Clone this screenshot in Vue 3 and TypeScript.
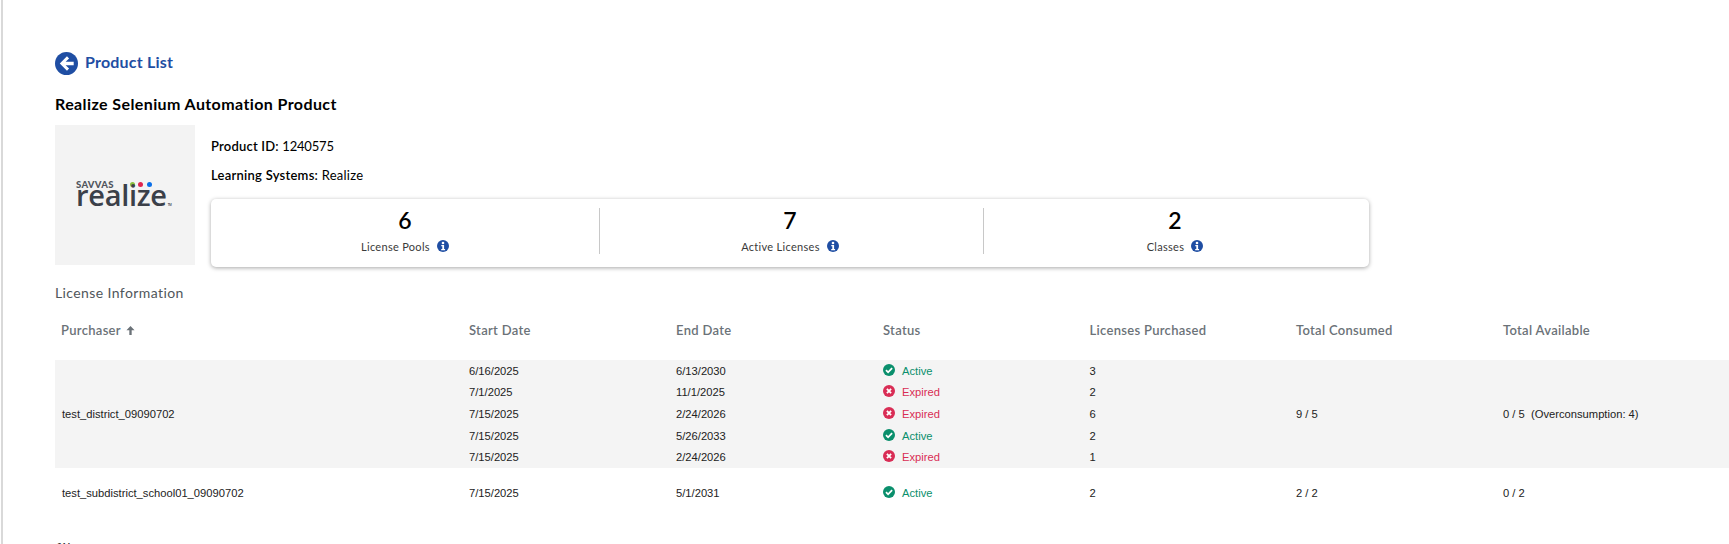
<script setup lang="ts">
type Pool = {
  start: string;
  end: string;
  active: boolean;
  purchased: number;
}

type Purchaser = {
  name: string;
  pools: Pool[];
  consumed: string;
  available: string;
}

const stats = [
  { value: 6, label: 'License Pools' },
  { value: 7, label: 'Active Licenses' },
  { value: 2, label: 'Classes' },
];

const columns = ['Start Date', 'End Date', 'Status', 'Licenses Purchased', 'Total Consumed', 'Total Available'];

const purchasers: Purchaser[] = [
  {
    name: 'test_district_09090702',
    consumed: '9 / 5',
    available: '0 / 5\u00a0\u00a0(Overconsumption: 4)',
    pools: [
      { start: '6/16/2025', end: '6/13/2030', active: true, purchased: 3 },
      { start: '7/1/2025', end: '11/1/2025', active: false, purchased: 2 },
      { start: '7/15/2025', end: '2/24/2026', active: false, purchased: 6 },
      { start: '7/15/2025', end: '5/26/2033', active: true, purchased: 2 },
      { start: '7/15/2025', end: '2/24/2026', active: false, purchased: 1 },
    ],
  },
  {
    name: 'test_subdistrict_school01_09090702',
    consumed: '2 / 2',
    available: '0 / 2',
    pools: [
      { start: '7/15/2025', end: '5/1/2031', active: true, purchased: 2 },
    ],
  },
];
</script>

<template>
  <div class="page">
    <a class="back">
      <svg class="back__icon" viewBox="0 0 24 24">
        <circle cx="12" cy="12" r="12" fill="#1f4ea3" />
        <path d="M12.500 4.500 5 12l7.500 7.500 2.200-2.200-3.600-3.500H19.500v-3.600h-8.400l3.600-3.500z" fill="#fff" />
      </svg>
      <span class="back__text">Product List</span>
    </a>
    <h1 class="title">Realize Selenium Automation Product</h1>

    <div class="product">
      <div class="logo">
        <div class="logo__inner">
          <div class="logo__top">
            <span class="logo__savvas">SAVVAS</span>
            <span class="logo__dot logo__dot--green"></span>
            <span class="logo__dot logo__dot--red"></span>
            <span class="logo__dot logo__dot--blue"></span>
          </div>
          <div class="logo__word">realize<span class="logo__tm">TM</span></div>
        </div>
      </div>
      <div class="details">
        <p class="details__line"><b>Product ID:</b> <span class="details__id">1240575</span></p>
        <p class="details__line details__line--wide"><b>Learning Systems:</b> Realize</p>
        <div class="stats">
          <div v-for="stat in stats" :key="stat.label" class="stat">
            <div class="stat__value">{{ stat.value }}</div>
            <div class="stat__label">
              {{ stat.label }}
              <svg class="stat__info" viewBox="0 0 12 12">
                <circle cx="6" cy="6" r="6" fill="#1f4ea3" />
                <circle cx="6" cy="3" r="1.300" fill="#fff" />
                <path d="M4.300 5h2.800v4h1v1.200H4.200V9h1.100V6.200h-1z" fill="#fff" />
              </svg>
            </div>
          </div>
        </div>
      </div>
    </div>

    <div class="section">License Information</div>

    <div class="table">
      <div class="row row--head">
        <div class="cell">
          Purchaser
          <svg class="arrow" viewBox="0 0 10 10">
            <path d="M5 0 9.500 4.800H6.300V10H3.700V4.800H.5z" fill="#6b7278" />
          </svg>
        </div>
        <div v-for="col in columns" :key="col" class="cell">{{ col }}</div>
      </div>
      <div
        v-for="(p, i) in purchasers"
        :key="p.name"
        class="row row--body"
        :class="{ 'row--shaded': i === 0 }">
        <div class="cell cell--name">{{ p.name }}</div>
        <div class="stack--pools">
          <div v-for="(pool, j) in p.pools" :key="j" class="pool">
            <div class="cell">{{ pool.start }}</div>
            <div class="cell">{{ pool.end }}</div>
            <div class="cell status" :class="pool.active ? 'status--ok' : 'status--bad'">
              <svg v-if="pool.active" class="status__icon" viewBox="0 0 12 12">
                <circle cx="6" cy="6" r="6" fill="#0a8f6c" />
                <path d="M3 6.200 5.100 8.300 9.100 4.200" fill="none" stroke="#fff" stroke-width="1.800" />
              </svg>
              <svg v-else class="status__icon" viewBox="0 0 12 12">
                <circle cx="6" cy="6" r="6" fill="#d92d55" />
                <path d="M3.900 3.900 8.100 8.100M8.100 3.900 3.900 8.100" fill="none" stroke="#fff" stroke-width="1.800" />
              </svg>
              {{ pool.active ? 'Active' : 'Expired' }}
            </div>
            <div class="cell">{{ pool.purchased }}</div>
          </div>
        </div>
        <div class="cell">{{ p.consumed }}</div>
        <div class="cell">{{ p.available }}</div>
      </div>
    </div>

    <div class="more">file</div>
  </div>
</template>

<style scoped>
.page {
  height: 544px;
  box-sizing: border-box;
  overflow: hidden;
  border-left: 2px solid #d9d9d9;
  margin-left: 1px;
  padding: 51px 0 0 52px;
  font-family: Lato, "Open Sans", sans-serif;
  color: #000;
}

.back {
  display: flex;
  align-items: center;
  gap: 7px;
  height: 24px;
  color: #1f4ea3;
  font-size: 16px;
  font-weight: 700;
  letter-spacing: 0.2px;
}

.back__icon {
  width: 23px;
  height: 23px;
}

.back__text {
  margin-bottom: 3px;
}

.title {
  margin: 19px 0 0;
  font-size: 16px;
  line-height: 20px;
  font-weight: 700;
  letter-spacing: 0.4px;
}

.product {
  display: flex;
  gap: 16px;
  margin-top: 11px;
}

.logo {
  width: 140px;
  height: 140px;
  background-color: #f3f3f3;
  display: flex;
  align-items: center;
  justify-content: center;
}

.logo__inner {
  width: 98px;
  color: #3b4049;
  margin-top: 3px;
}

.logo__top {
  display: flex;
  align-items: center;
  gap: 3.500px;
  height: 7px;
}

.logo__savvas {
  width: 50px;
  font-size: 9.500px;
  font-weight: 900;
  line-height: 7px;
  letter-spacing: 0.3px;
  color: #50555d;
}

.logo__dot {
  width: 5px;
  height: 5px;
  border-radius: 50%;
}

.logo__dot--green { background-color: #8cc13f; }
.logo__dot--red { background-color: #e0264f; }
.logo__dot--blue { background-color: #0a6fe8; }

.logo__word {
  margin-top: 0;
  font-family: "Open Sans", sans-serif;
  font-size: 29px;
  line-height: 14px;
  font-weight: 600;
  letter-spacing: -0.3px;
  white-space: nowrap;
}

.logo__tm {
  font-size: 3px;
  margin-left: 1px;
}

.details {
  flex: 0 0 1158px;
}

.details__line {
  margin: 0;
  font-size: 13px;
  line-height: 16px;
  letter-spacing: 0.2px;
  padding-top: 13px;
  height: 29px;
  box-sizing: border-box;
}

.details__line--wide {
  letter-spacing: 0.25px;
}

.details__line b {
  font-weight: 600;
}

.details__id {
  letter-spacing: -0.2px;
}

.stats {
  display: grid;
  grid-template-columns: 388px 384px 1fr;
  margin-top: 16px;
  height: 68px;
  width: 1158px;
  background-color: #fff;
  border-radius: 5px;
  box-shadow: 0 1px 4px rgba(0, 0, 0, 0.35);
  padding-top: 9px;
  box-sizing: border-box;
}

.stat {
  height: 46px;
  text-align: center;
  border-left: 1px solid #c8c8c8;
  padding-right: 3px;
}

.stat:first-child {
  border-left: none;
  padding-right: 0;
}

.stat__value {
  font-size: 23px;
  line-height: 24px;
  font-weight: 600;
}

.stat__label {
  margin-top: 7px;
  font-size: 11px;
  line-height: 16px;
  letter-spacing: 0.3px;
  color: #3a3a3a;
}

.stat__info {
  width: 12px;
  height: 12px;
  margin-left: 4px;
  vertical-align: -1px;
}

.section {
  margin-top: 16px;
  font-size: 14px;
  line-height: 20px;
  letter-spacing: 0.4px;
  color: #50565b;
}

.table {
  margin-top: 7px;
}

.row {
  display: grid;
  grid-template-columns: 408px 207px 207px 206.500px 206.500px 207px 1fr;
  align-items: center;
}

.row--head {
  height: 40px;
  margin-bottom: 10px;
  color: #6b7278;
  font-size: 13px;
  font-weight: 600;
  letter-spacing: 0.3px;
}

.row--body {
  font-family: "Liberation Sans", Arial, sans-serif;
  font-size: 11.200px;
  color: #222;
  min-height: 50px;
}

.row--shaded {
  background-color: #f4f4f4;
}

.cell {
  padding-left: 6px;
}

.cell--name {
  padding-left: 7px;
}

.stack--pools {
  grid-column: 2 / span 4;
}

.pool {
  display: grid;
  grid-template-columns: 207px 207px 206.500px 206.500px;
  align-items: center;
  height: 21.600px;
}

.status {
  display: flex;
  align-items: center;
  gap: 7px;
}

.status__icon {
  width: 12px;
  height: 12px;
  margin-top: -2px;
}

.status--ok { color: #0a8f6c; }
.status--bad { color: #d92d55; }

.arrow {
  width: 9px;
  height: 9px;
  margin-left: 2px;
}

.more {
  margin-top: 20px;
  padding-left: 1px;
  font-size: 14px;
  line-height: 20px;
  letter-spacing: 1.500px;
  color: #333;
}
</style>

<style>
html, body {
  background: #fff;
}
</style>
